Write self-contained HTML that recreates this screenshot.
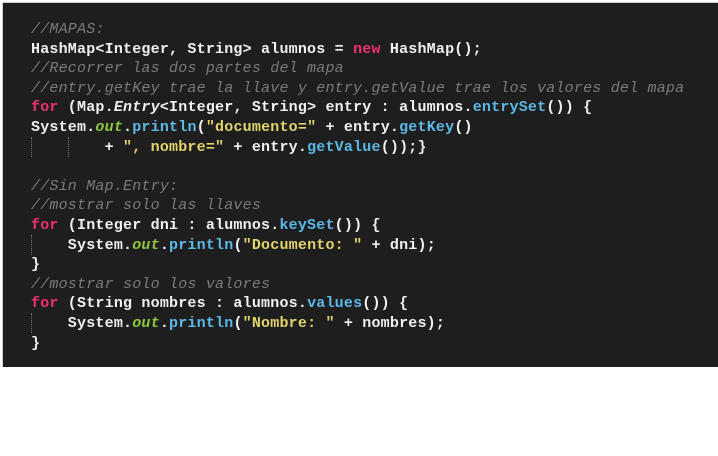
<!DOCTYPE html>
<html><head><meta charset="utf-8"><style>
html,body{margin:0;padding:0;background:#fff;width:718px;height:456px;overflow:hidden}
.box{position:absolute;left:2px;top:2px;width:716px;height:365px;background:#1e1e1e;border-left:1px solid #cfcfcf;border-top:1px solid #cfcfcf;box-sizing:border-box}
pre{position:absolute;left:31px;top:20px;margin:0;font-family:"Liberation Mono",monospace;font-size:15px;letter-spacing:0.2px;line-height:19.6px;color:#f0f0f0;font-weight:bold}
.c{color:#7b7b7b;font-style:italic;font-weight:normal}
.k{color:#f0306f}
.g{color:#8ec63f;font-style:italic}
.m{color:#5cb8e6}
.s{color:#e2d36b}
.i{font-style:italic}
.guide{position:absolute;width:0;border-left:1px dotted #777}
</style></head><body>
<div class="box"></div>
<div class="guide" style="left:31px;top:137px;height:20px"></div>
<div class="guide" style="left:68px;top:137px;height:20px"></div>
<div class="guide" style="left:31px;top:235px;height:20px"></div>
<div class="guide" style="left:31px;top:313px;height:20px"></div>
<pre><span class="c">//MAPAS:</span>
HashMap&lt;Integer, String&gt; alumnos = <span class="k">new</span> HashMap();
<span class="c">//Recorrer las dos partes del mapa</span>
<span class="c">//entry.getKey trae la llave y entry.getValue trae los valores del mapa</span>
<span class="k">for</span> (Map.<span class="i">Entry</span>&lt;Integer, String&gt; entry : alumnos.<span class="m">entrySet</span>()) {
System.<span class="g">out</span>.<span class="m">println</span>(<span class="s">"documento="</span> + entry.<span class="m">getKey</span>()
        + <span class="s">", nombre="</span> + entry.<span class="m">getValue</span>());}

<span class="c">//Sin Map.Entry:</span>
<span class="c">//mostrar solo las llaves</span>
<span class="k">for</span> (Integer dni : alumnos.<span class="m">keySet</span>()) {
    System.<span class="g">out</span>.<span class="m">println</span>(<span class="s">"Documento: "</span> + dni);
}
<span class="c">//mostrar solo los valores</span>
<span class="k">for</span> (String nombres : alumnos.<span class="m">values</span>()) {
    System.<span class="g">out</span>.<span class="m">println</span>(<span class="s">"Nombre: "</span> + nombres);
}</pre>
</body></html>
